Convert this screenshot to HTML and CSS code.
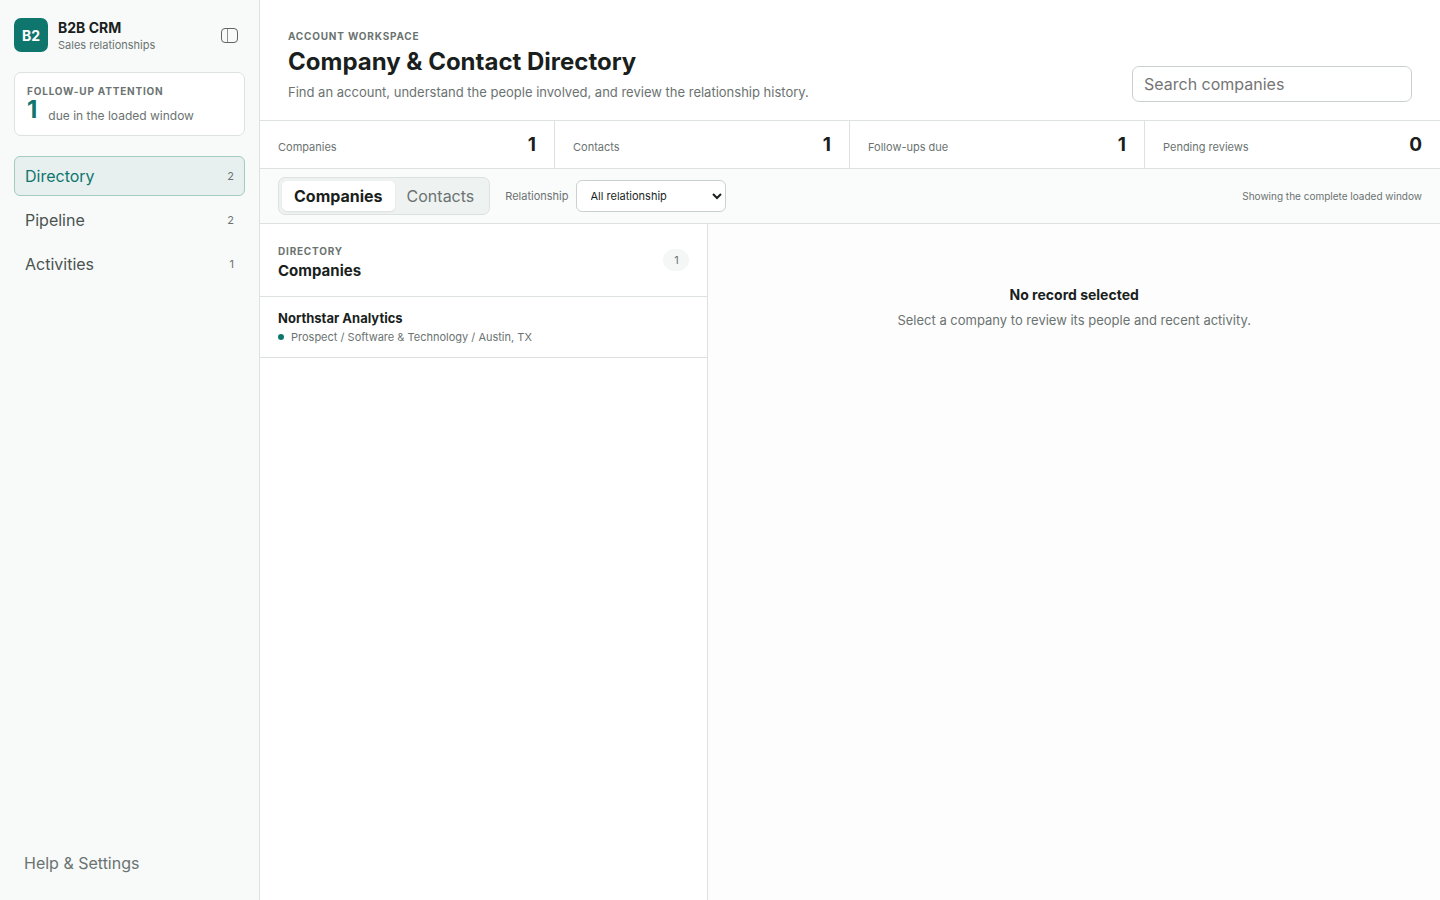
FILE: index.html
```html
<!DOCTYPE html>
<html lang="en">
<head>
<meta charset="utf-8">
<meta name="viewport" content="width=device-width, initial-scale=1">
<title>B2B CRM</title>
<link rel="stylesheet" href="styles.css">
</head>
<body>
<div class="app">
  <aside class="sidebar">
    <div class="brand">
      <span class="brand-mark">B2</span>
      <div class="brand-copy">
        <strong class="brand-name">B2B CRM</strong>
        <span class="brand-sub">Sales relationships</span>
      </div>
      <button class="collapse" type="button" aria-label="Toggle sidebar">
        <svg width="18" height="16" viewBox="0 0 18 16" fill="none" stroke="currentColor" aria-hidden="true">
          <rect x=".5" y="1.5" width="16" height="14" rx="3.5"/>
          <path d="M6.5 1.5v14" stroke-width=".7"/>
        </svg>
      </button>
    </div>
    <section class="attention">
      <span class="eyebrow">FOLLOW-UP ATTENTION</span>
      <div class="attention-row"><strong class="attention-count">1</strong><span class="attention-text">due in the loaded window</span></div>
    </section>
    <nav class="nav">
      <button class="nav-item nav-active" type="button"><span>Directory</span><span class="nav-count">2</span></button>
      <button class="nav-item" type="button"><span>Pipeline</span><span class="nav-count">2</span></button>
      <button class="nav-item" type="button"><span>Activities</span><span class="nav-count">1</span></button>
    </nav>
    <button class="help" type="button">Help &amp; Settings</button>
  </aside>
  <main class="main">
    <header class="header">
      <div>
        <span class="eyebrow">ACCOUNT WORKSPACE</span>
        <h1 class="title">Company &amp; Contact Directory</h1>
        <p class="subtitle">Find an account, understand the people involved, and review the relationship history.</p>
      </div>
      <input class="search" type="search" placeholder="Search companies" aria-label="Search companies">
    </header>
    <section class="stats">
      <div class="stat"><span class="stat-label">Companies</span><strong class="stat-value">1</strong></div>
      <div class="stat"><span class="stat-label">Contacts</span><strong class="stat-value">1</strong></div>
      <div class="stat"><span class="stat-label">Follow-ups due</span><strong class="stat-value">1</strong></div>
      <div class="stat"><span class="stat-label">Pending reviews</span><strong class="stat-value">0</strong></div>
    </section>
    <div class="toolbar">
      <div class="tabs">
        <button class="tab tab-active" type="button">Companies</button>
        <button class="tab" type="button">Contacts</button>
      </div>
      <label class="filter" for="relationship">Relationship</label>
      <select class="select" id="relationship"><option>All relationship</option></select>
      <span class="status">Showing the complete loaded window</span>
    </div>
    <div class="panes">
      <section class="list">
        <div class="list-head">
          <div>
            <span class="eyebrow">DIRECTORY</span>
            <h2 class="list-title">Companies</h2>
          </div>
          <span class="badge">1</span>
        </div>
        <button class="record" type="button">
          <strong class="record-name">Northstar Analytics</strong>
          <span class="record-meta"><span class="dot"></span>Prospect / Software &amp; Technology / Austin, TX</span>
        </button>
      </section>
      <section class="detail">
        <h2 class="empty-title">No record selected</h2>
        <p class="empty-text">Select a company to review its people and recent activity.</p>
      </section>
    </div>
  </main>
</div>
</body>
</html>
```
FILE: styles.css
```css
* { box-sizing: border-box; }
body {
  margin: 0;
  font-family: Inter, "Liberation Sans", sans-serif;
  color: #1a1f1e;
  background: #fff;
}
button, input, select { font-family: inherit; color: inherit; margin: 0; }
button { border: 0; background: none; padding: 0; cursor: pointer; }
h1, h2, p { margin: 0; }

.app { display: grid; grid-template-columns: 260px 1fr; min-height: 100vh; }

.sidebar {
  display: flex;
  flex-direction: column;
  padding: 18px 14px;
  background: #f7faf9;
  border-right: 1px solid #dde1e0;
}
.brand { display: flex; align-items: center; gap: 10px; }
.brand-mark {
  display: grid;
  place-items: center;
  width: 34px;
  height: 34px;
  border-radius: 7px;
  background: #0f766e;
  color: #fff;
  font-size: 14px;
  font-weight: 700;
}
.brand-copy { flex: 1; display: flex; flex-direction: column; }
.brand-name { font-size: 14px; line-height: 20px; }
.brand-sub { font-size: 11px; line-height: 14px; color: #6b7371; }
.collapse { display: grid; place-items: center; width: 30px; height: 30px; color: #5f6664; }

.eyebrow {
  display: block;
  font-size: 10px;
  line-height: 12px;
  font-weight: 700;
  letter-spacing: 0.08em;
  color: #6b7371;
}
.attention {
  margin-top: 20px;
  padding: 12px;
  background: #fff;
  border: 1px solid #dde1e0;
  border-radius: 7px;
}
.attention-row { display: flex; align-items: flex-end; gap: 11px; }
.attention-count { font-size: 24px; line-height: 26px; color: #0f766e; }
.attention-text { font-size: 12px; line-height: 14px; color: #6b7371; }

.nav { display: flex; flex-direction: column; gap: 4px; margin-top: 20px; }
.nav-item {
  display: flex;
  align-items: center;
  justify-content: space-between;
  height: 40px;
  padding: 0 10px;
  border: 1px solid transparent;
  border-radius: 6px;
  font-size: 16px;
  color: #4b5351;
}
.nav-active { background: #e7f0ef; border-color: #a3cbc0; color: #0f766e; }
.nav-count { font-size: 11px; color: #6b7371; }
.help { margin-top: auto; padding: 0 10px; height: 38px; font-size: 16px; text-align: left; color: #6b7371; }

.main { display: flex; flex-direction: column; min-width: 0; }
.header {
  display: flex;
  align-items: flex-end;
  justify-content: space-between;
  gap: 24px;
  padding: 30px 28px 18px;
  border-bottom: 1px solid #dde1e0;
}
.title { margin-top: 4px; font-size: 24px; line-height: 32px; font-weight: 700; }
.subtitle { margin-top: 5px; padding-bottom: 1px; font-size: 13px; line-height: 18px; color: #6b7371; }
.search {
  width: 280px;
  height: 36px;
  padding: 0 11px;
  border: 1px solid #cbd1cf;
  border-radius: 7px;
  background: #fff;
  font-size: 16px;
}
.search::placeholder { color: #757575; }

.stats { display: grid; grid-template-columns: repeat(4, 1fr); border-bottom: 1px solid #dde1e0; }
.stat {
  display: flex;
  align-items: baseline;
  justify-content: space-between;
  padding: 12px 18px 11px;
  border-right: 1px solid #dde1e0;
}
.stat:last-child { border-right: 0; }
.stat-label { font-size: 11px; color: #6b7371; }
.stat-value { font-size: 19px; line-height: 24px; }

.toolbar {
  display: flex;
  align-items: center;
  padding: 8px 18px;
  background: #fafbfb;
  border-bottom: 1px solid #dde1e0;
}
.tabs {
  display: flex;
  padding: 3px;
  border: 1px solid #dde1e0;
  border-radius: 7px;
  background: #eef2f1;
}
.tab { height: 30px; padding: 0 12px; border-radius: 5px; font-size: 16px; color: #6b7371; }
.tab-active { background: #fff; color: #1a1f1e; font-weight: 700; box-shadow: 0 1px 2px rgba(0, 0, 0, .08); }
.filter { margin-left: 15px; margin-right: 7px; font-size: 11px; color: #6b7371; }
.select {
  width: 150px;
  height: 32px;
  padding: 0 10px;
  border: 1px solid #cbd1cf;
  border-radius: 6px;
  background: #fff;
  font-size: 11px;
}
.status { margin-left: auto; font-size: 10px; color: #6b7371; }

.panes { flex: 1; display: grid; grid-template-columns: 38fr 62fr; }
.list { border-right: 1px solid #dde1e0; }
.list-head {
  display: flex;
  align-items: flex-start;
  justify-content: space-between;
  padding: 21px 18px 15px;
  border-bottom: 1px solid #dde1e0;
}
.list-title { margin-top: 4px; font-size: 15px; line-height: 20px; }
.badge {
  min-width: 26px;
  margin-top: 4px;
  padding: 4px 8px;
  border-radius: 11px;
  background: #f4f7f6;
  font-size: 11px;
  line-height: 14px;
  text-align: center;
  color: #6b7371;
}
.record {
  display: flex;
  flex-direction: column;
  gap: 2px;
  width: 100%;
  padding: 13px 18px 12px;
  border-bottom: 1px solid #dde1e0;
  text-align: left;
}
.record-name { font-size: 13px; line-height: 17px; }
.record-meta { display: flex; align-items: center; gap: 7px; font-size: 11px; line-height: 16px; color: #6b7371; }
.dot { width: 6px; height: 6px; border-radius: 50%; background: #0f766e; }
.detail { padding: 62px 24px; text-align: center; background: #fdfdfd; }
.empty-title { font-size: 14px; line-height: 18px; }
.empty-text { margin-top: 7px; font-size: 13px; line-height: 18px; color: #6b7371; }
```
